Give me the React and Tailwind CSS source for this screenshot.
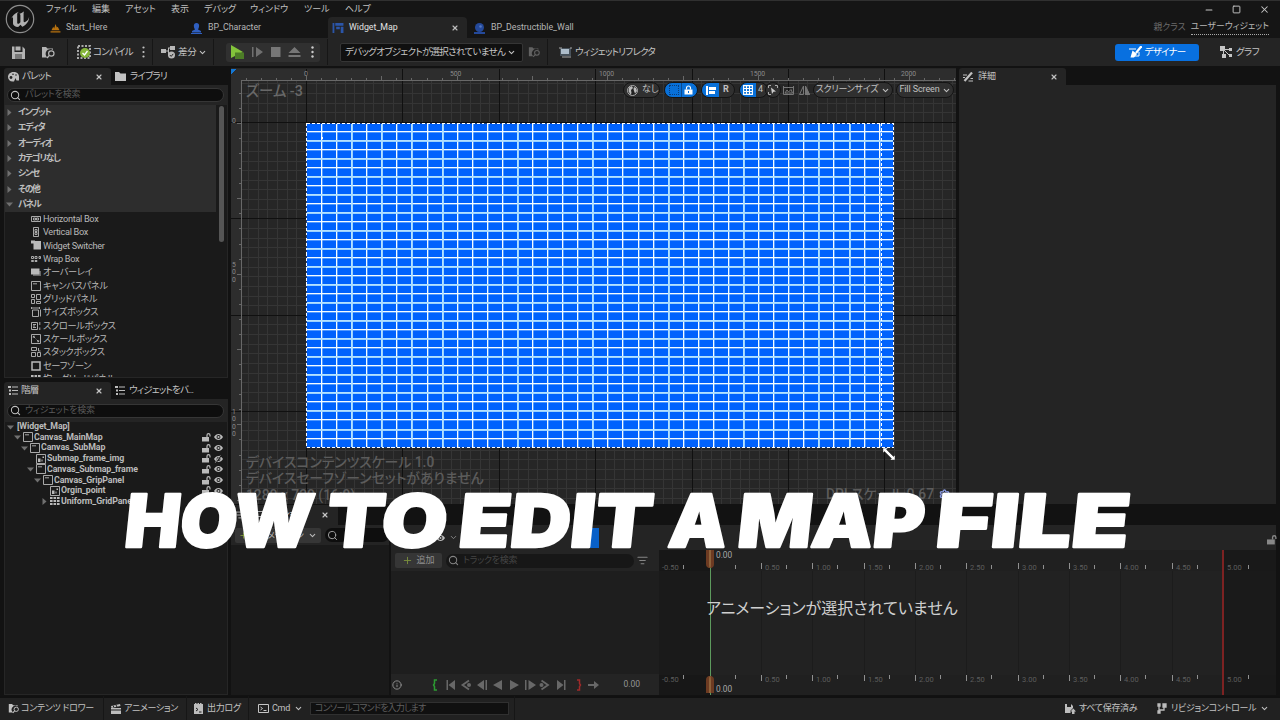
import {
  ChevronDown,
  Search,
  X,
  Info,
  Plus,
  Settings,
  Minus,
  Square,
  ListFilter,
} from "lucide-react";
import clsx from "clsx";

const MENU = [
  { label: "ファイル", w: "w-[46px]" },
  { label: "編集", w: "w-[33px]" },
  { label: "アセット", w: "w-[46px]" },
  { label: "表示", w: "w-[33px]" },
  { label: "デバッグ", w: "w-[46px]" },
  { label: "ウィンドウ", w: "w-[54px]" },
  { label: "ツール", w: "w-[41px]" },
  { label: "ヘルプ", w: "w-[40px]" },
];

const CATEGORIES = ["インプット", "エディタ", "オーディオ", "カテゴリなし", "シンセ", "その他", "パネル"];

const WIDGETS = [
  { label: "Horizontal Box", icon: "hbox" },
  { label: "Vertical Box", icon: "vbox" },
  { label: "Widget Switcher", icon: "switcher" },
  { label: "Wrap Box", icon: "wrap" },
  { label: "オーバーレイ", icon: "overlay" },
  { label: "キャンバスパネル", icon: "canvas" },
  { label: "グリッドパネル", icon: "grid" },
  { label: "サイズボックス", icon: "size" },
  { label: "スクロールボックス", icon: "scroll" },
  { label: "スケールボックス", icon: "scale" },
  { label: "スタックボックス", icon: "stack" },
  { label: "セーフゾーン", icon: "safe" },
  { label: "均一グリッドパネル", icon: "uniform" },
];

const TREE = [
  { label: "Canvas_MainMap", pad: "pl-[9px]", icon: "canvas", arrow: "down" },
  { label: "Canvas_SubMap", pad: "pl-[16px]", icon: "canvas", arrow: "down" },
  { label: "Submap_frame_img", pad: "pl-[22px]", icon: "img", hidden: true },
  { label: "Canvas_Submap_frame", pad: "pl-[22px]", icon: "canvas", arrow: "down" },
  { label: "Canvas_GripPanel", pad: "pl-[29px]", icon: "canvas", arrow: "down" },
  { label: "Orgin_point", pad: "pl-[36px]", icon: "img" },
  { label: "Uniform_GridPanel", pad: "pl-[36px]", icon: "uniform", arrow: "right" },
];

const GLYPHS = {
  hbox: <path d="M.5 2.500h9v5h-9zM2.500 4h2v2h-2zM5.500 4h2v2h-2z" />,
  vbox: <path d="M2.500.5h5v9h-5zM4 2.500h2v2H4zM4 5.500h2v2H4z" />,
  switcher: (
    <g fill="currentColor" stroke="none">
      <path d="M2.500 1H10v8.500H2.500zM0 .5h4v3H0z" />
    </g>
  ),
  wrap: <path d="M.5 2.500h2v2h-2zM4 2.500h2v2H4zM8 2.500h1.500v2H8zM.5 6.500h2v1h-2zM4 6.500h2v1H4z" />,
  overlay: (
    <g stroke="none">
      <path d="M2 4h8v5H2z" fill="#666" />
      <path d="M0 1.500h8.500V7.500H0z" fill="currentColor" />
    </g>
  ),
  canvas: <path d="M.5.5h9v9h-9zM2 2.800h4" />,
  grid: <path d="M.5.5h3v3h-3zM5.500.5h4v5h-4zM.5 5.500h3v4h-3zM5.500 7.500h4v2h-4z" />,
  size: <path d="M1.500 3h6v6.500h-6zM.5 1h8M9.500 2.500v7M.5 0v2M8.500 0v2" />,
  scroll: <path d="M.5 1.500h6v7h-6zM2 3.500h3M2 5h2M2 6.500h3M8.800 1v3M8.800 6.500v2.500" />,
  scale: <path d="M.5.5h9v9h-9zM2.300 2.300l2 2M2.300 2.300h1.500M2.300 2.300v1.500M7.700 7.700l-2-2M7.700 7.700H6.200M7.700 7.700V6.200" />,
  stack: <path d="M.5.5h5v3h-5zM.5 5.500h4v4h-4zM6.500 5.500h3v4h-3zM7.500 1v3h2" />,
  safe: <path d="M1 1h8v8H1z" strokeWidth="1.500" />,
  uniform: (
    <path
      d="M0 1h2.600v2H0zM3.500 1h2.600v2H3.500zM7 1h2.600v2H7zM0 4h2.600v2H0zM3.500 4h2.600v2H3.500zM7 4h2.600v2H7zM0 7h2.600v2H0zM3.500 7h2.600v2H3.500zM7 7h2.600v2H7z"
      fill="currentColor"
      stroke="none"
    />
  ),
  img: (
    <g>
      <path d="M.5.5h9v9h-9z" />
      <path d="M2 8V4.500h2.500V8zM5.500 7.500V5.500h1v2zM6.500 2.500h1.500V4H6.500z" fill="currentColor" stroke="none" />
    </g>
  ),
};

function Glyph({ name }) {
  return (
    <svg viewBox="0 0 10 10" className="size-[10px] shrink-0 text-[#b9b9b9]" fill="none" stroke="currentColor" strokeWidth="0.9">
      {GLYPHS[name]}
    </svg>
  );
}

function Arrow({ dir }) {
  return (
    <svg viewBox="0 0 7 7" className="size-[7px] shrink-0 fill-[#707070]">
      {dir === "down" && <path d="M0 1.500h7L3.500 5.500z" />}
      {dir === "right" && <path d="M1.500 0v7L5.500 3.500z" />}
    </svg>
  );
}

/* Solid padlock with the shackle swung to the right */
function Unlock({ className }) {
  return (
    <svg viewBox="0 0 9 9" className={clsx("shrink-0", className)} fill="currentColor">
      <path d="M0 4h7v4.500H0z" />
      <path d="M5 4V2.200a1.500 1.500 0 0 1 3 0V3.500" fill="none" stroke="currentColor" strokeWidth="1.200" />
    </svg>
  );
}

function EyeIcon({ off }) {
  return (
    <svg viewBox="0 0 10 8" className="h-[8px] w-[9px] shrink-0">
      <path d="M0 4c2.500-4.500 7.500-4.500 10 0-2.500 4.500-7.500 4.500-10 0z" fill="#bdbdbd" />
      <circle cx="5" cy="4" r="2.200" fill="#1a1a1a" />
      <circle cx="5" cy="4" r="1.200" fill="#bdbdbd" />
      {off && <path d="M8 0L2 8" stroke="#1a1a1a" strokeWidth="1.500" />}
      {off && <path d="M7 0L1.500 8" stroke="#bdbdbd" strokeWidth="0.900" />}
    </svg>
  );
}

function Dots() {
  return (
    <svg viewBox="0 0 3 12" className="h-3 w-[3px] shrink-0 fill-[#c4c4c4]">
      <circle cx="1.500" cy="1.500" r="1.100" />
      <circle cx="1.500" cy="6" r="1.100" />
      <circle cx="1.500" cy="10.500" r="1.100" />
    </svg>
  );
}

function FolderSearch({ className }) {
  return (
    <svg viewBox="0 0 15 13" className={clsx("shrink-0", className)} fill="currentColor">
      <path d="M1 1h4l1.500 1.500H12V4a4 4 0 0 0-5.500 7.500H1z" />
      <circle cx="10.300" cy="7.500" r="2.700" fill="none" stroke="currentColor" strokeWidth="1.200" />
      <path d="M8.300 9.500L6 12" stroke="currentColor" strokeWidth="1.300" />
    </svg>
  );
}

function GraphIcon({ className }) {
  return (
    <svg viewBox="0 0 14 12" className={clsx("shrink-0", className)} fill="currentColor">
      <path d="M1 0h5v5H1zM10 2h3v3h-3zM10 8h3v3h-3zM3 8h4v4H3z" />
      <path d="M6 3.500h4M4.500 5v3M6 5l4 4" stroke="currentColor" />
    </svg>
  );
}

function UnrealLogo() {
  return (
    <svg viewBox="0 0 30 30" className="size-[30px] shrink-0">
      <circle cx="15" cy="15" r="13.700" fill="#151515" stroke="#8d8d8d" strokeWidth="1.200" />
      <path
        d="M6 15.500c1-3.500 4-6.300 7.800-7.700-1.200 1-1.600 1.700-1.600 2.800v8.300c0 .8 1.300 1.300 2.200.3l1-.9v-7.200c0-.8-.5-1.100-1.200-1.200 1.500-.3 3.300-1.200 4.500-2.300.2 0 .3.200.2.500-.4.600-.3 1.200-.3 2.200v7c0 .9.800 1.100 1.500.8 2.300-1 3.600-3 4-5.300.2 4-2.400 8.300-6.800 9.900l-1.800-1.900-2.300 2.200c-3.300-.1-5.200-2-5.200-3.600v-6.100c-.9.100-1.600 1-2 2.200z"
        fill="#b0b0b0"
      />
    </svg>
  );
}

function TitleBar() {
  return (
    <header className="flex h-[38px] border-t border-[#303030] bg-[#151515]">
      <div className="w-[46px] shrink-0 pl-[5px] pt-[3px]">
        <UnrealLogo />
      </div>
      <div className="flex min-w-0 flex-1 flex-col">
        <div className="flex h-[16px] items-center pt-px text-[9px] text-[#c0c0c0]">
          {MENU.map((m) => (
            <span key={m.label} className={m.w}>
              {m.label}
            </span>
          ))}
          <div className="ml-auto flex items-center gap-[18px] pr-[10px] text-[#c8c8c8]">
            <Minus size={10} strokeWidth={2.500} />
            <Square size={9} strokeWidth={2.500} />
            <X size={11} strokeWidth={2.200} />
          </div>
        </div>
        <div className="flex h-[21px] items-center text-[8.800px] text-[#b5b5b5]">
          <div className="flex w-[138px] items-center gap-[5px] pl-[4px] pt-px">
            <svg viewBox="0 0 11 10" className="h-[9px] w-[11px]" fill="#b8720f">
              <path d="M0 8h11v1.500H0zM1 7l2-4 1 2 1.500-5L7 4l1-1 2 4z" />
            </svg>
            Start_Here
          </div>
          <div className="flex w-[144px] items-center gap-[6px] pl-[7px] pt-px">
            <svg viewBox="0 0 11 11" className="size-[11px]" fill="#2f5fc0">
              <path d="M5.500 0C9 0 8.500 4 7 6.500L10 8v1.500H1V8l3-1.500C2.500 4 2 0 5.500 0zM0 10h11v1H0z" />
            </svg>
            BP_Character
          </div>
          <div className="flex h-full w-[139px] items-center rounded-t bg-[#242424] pl-[4px] pr-[8px] pt-px text-[#e2e2e2]">
            <svg viewBox="0 0 12 11" className="mr-[5px] h-[10px] w-3" fill="#2b55a8">
              <path d="M0 0h2v11H0zM3 0h9v3H3zM4 4h4v3H4zM9 4h3v7H9z" />
            </svg>
            Widget_Map
            <X size={8} strokeWidth={3.500} className="ml-auto text-[#bbb]" />
          </div>
          <div className="flex items-center gap-[6px] pl-[7px] pt-px">
            <svg viewBox="0 0 11 11" className="size-[11px]" fill="#24499a">
              <circle cx="5.500" cy="4.500" r="4.500" />
              <path d="M0 9h11v2H0z" />
              <circle cx="6.500" cy="3.500" r="1.300" fill="#5577c0" />
            </svg>
            BP_Destructible_Wall
          </div>
          <div className="ml-auto flex gap-[5px] pr-[11px] pt-px">
            <span className="text-[#6c6c6c]">親クラス</span>
            <span className="border-b border-dotted border-[#aaa] leading-[10px]">ユーザーウィジェット</span>
          </div>
        </div>
      </div>
    </header>
  );
}

function Sep({ className }) {
  return <div className={clsx("h-[26px] w-px shrink-0 bg-[#161616]", className)} />;
}

function Toolbar() {
  return (
    <div className="flex h-[28px] items-center bg-[#242424] text-[9.500px] tracking-[-0.75px] text-[#c4c4c4]">
      <div className="flex w-[67px] items-center gap-[16px] pl-[12px] text-[#b4b4b4]">
        <svg viewBox="0 0 13 13" className="size-[13px]" fill="currentColor">
          <path d="M0 .5h2.500v5.500h8V.5L13 3v10H0zM3.500.5h5v4h-5z" />
          <path d="M3 8h7v5H3z" fill="#777" />
        </svg>
        <FolderSearch className="h-[13px] w-[15px]" />
      </div>
      <Sep />
      <div className="flex w-[84px] items-center gap-[2px] pl-[9px]">
        <svg viewBox="0 0 14 14" className="size-[14px] shrink-0">
          <path d="M1 1h12v12H1z" fill="none" stroke="#aaa" strokeWidth="2" strokeDasharray="2 1.500" />
          <circle cx="8" cy="8" r="5" fill="#86b63a" />
          <path d="M5.500 8l2 2 3-4" fill="none" stroke="#fff" strokeWidth="1.300" />
        </svg>
        コンパイル
        <span className="ml-auto mr-[7px]">
          <Dots />
        </span>
      </div>
      <Sep />
      <div className="flex w-[60px] items-center gap-[2px] pl-[8px]">
        <svg viewBox="0 0 15 13" className="h-[13px] w-[15px] shrink-0" fill="#b8b8b8">
          <path d="M0 3h5v4H0zM9 0h5v4H9zM5 4.500h2V1.500h2v1H8V9h1v1H7V5.500H5z" />
          <circle cx="10.500" cy="9" r="3.500" />
          <path d="M8.800 9l1.400 1.400 2-2.500" fill="none" stroke="#242424" />
        </svg>
        <span className="tracking-[-0.3px]">差分</span>
        <ChevronDown size={9} strokeWidth={2.800} />
      </div>
      <Sep />
      <div className="ml-[12px] flex h-[19px] w-[94px] items-center rounded-[3px] bg-[#303030] pl-[4px]">
        <svg viewBox="0 0 88 14" className="h-[14px] w-[88px]">
          <path d="M1 0v13l12-6z" fill="#83c43b" />
          <path d="M5 7.500h9V14H5z" fill="#4d7d27" />
          <path d="M22 2h1.500v10H22zM26 2l7 5-7 5z" fill="#707070" />
          <path d="M41 2h9.500v10H41z" fill="#777" />
          <path d="M58.500 8l6-6 6 6zM58.500 10h12v2h-12z" fill="#777" />
          <circle cx="82.500" cy="2.500" r="1.200" fill="#ccc" />
          <circle cx="82.500" cy="7" r="1.200" fill="#ccc" />
          <circle cx="82.500" cy="11.500" r="1.200" fill="#ccc" />
        </svg>
      </div>
      <Sep className="ml-[7px]" />
      <div className="ml-[12px] flex h-[19px] w-[183px] items-center justify-between rounded-[2px] border border-[#353535] bg-[#101010] pl-[4px] pr-[6px] tracking-[-0.7px]">
        デバッグオブジェクトが選択されていません
        <ChevronDown size={9} strokeWidth={2.800} />
      </div>
      <FolderSearch className="ml-[5px] h-[12px] w-[13px] text-[#626262]" />
      <Sep className="ml-[6px]" />
      <div className="ml-[11px] flex items-center gap-[3px]">
        <svg viewBox="0 0 13 11" className="h-[11px] w-[13px]">
          <path d="M1 1h11v8H1z" fill="#47515a" />
          <path d="M2 2h8v5H2z" fill="#aebdca" />
          <path d="M0 1h3M11 1h2M3 10h9" stroke="#aaa" />
        </svg>
        ウィジェットリフレクタ
      </div>
      <div className="ml-auto flex h-[17px] w-[84px] items-center justify-center gap-[3px] rounded-[3px] bg-[#0870e0] text-white">
        <svg viewBox="0 0 13 12" className="h-3 w-[13px]" fill="none" stroke="currentColor">
          <path d="M0 3h7M10 6v4H4" strokeWidth="1" />
          <path d="M12.500 0L7 7" strokeWidth="2.200" />
          <path d="M3.500 4.500L8 8l-3 3.500H1.500z" fill="currentColor" stroke="none" />
        </svg>
        デザイナー
      </div>
      <div className="flex w-[81px] items-center gap-[3px] pl-[20px] tracking-[-0.6px]">
        <GraphIcon className="h-[12px] w-[14px]" />
        グラフ
      </div>
    </div>
  );
}

function SearchBox({ placeholder }) {
  return (
    <div className="ml-[3px] mr-[4px] flex h-[14px] items-center gap-[4px] rounded-full border border-[#363636] bg-[#0e0e0e] pl-[2px] text-[9px] tracking-[-0.2px] text-[#5a5a5a]">
      <Search size={11} strokeWidth={2.200} className="text-[#c0c0c0]" />
      {placeholder}
    </div>
  );
}

function Tabs({ first, second, icons }) {
  return (
    <div className="flex h-[17px] shrink-0 items-center text-[9.500px] tracking-[-0.8px] text-[#c4c4c4]">
      <div className="flex h-full w-[107px] items-center gap-[3px] rounded-t-[3px] bg-[#242424] pl-[4px] pr-[8px]">
        {icons[0]}
        {first}
        <X size={8} strokeWidth={3.500} className="ml-auto" />
      </div>
      <div className="flex items-center gap-[4px] pl-[4px]">
        {icons[1]}
        {second}
      </div>
    </div>
  );
}

const paletteIcon = (
  <svg viewBox="0 0 11 10" className="h-[10px] w-[11px]" fill="#bdbdbd">
    <path d="M5.500 0C9 0 11 2 11 4.500v4H8.500L7.500 6 6 9.500H4.500C2 9.500 0 7.500 0 5s2-5 5.500-5z" />
    <circle cx="3" cy="5.500" r="1.400" fill="#242424" />
    <circle cx="5" cy="2.300" r=".8" fill="#242424" />
    <circle cx="8" cy="3" r=".8" fill="#242424" />
  </svg>
);
const folderIcon = (
  <svg viewBox="0 0 11 9" className="h-[9px] w-[11px]" fill="#c2c2c2">
    <path d="M0 0h4l1.500 1.500H11V9H0z" />
  </svg>
);
const listIcon = (
  <svg viewBox="0 0 10 9" className="h-[9px] w-[10px]" fill="#bdbdbd">
    <path d="M0 0h3v2H0zM4 .5h6v1H4zM1 3.500h2v2H1zM4 4h6v1H4zM1 7h2v2H1zM4 7.500h6v1H4z" />
  </svg>
);

function Palette() {
  return (
    <section className="flex h-[310px] flex-col">
      <Tabs first="パレット" second="ライブラリ" icons={[paletteIcon, folderIcon]} />
      <div className="flex h-[20px] shrink-0 flex-col justify-center bg-[#242424]">
        <SearchBox placeholder="パレットを検索" />
      </div>
      <div className="flex min-h-0 flex-1 justify-between overflow-hidden border border-t-0 border-[#262626] bg-[#1a1a1a]">
        <div className="w-[211px]">
          {CATEGORIES.map((c, i) => (
            <div
              key={c}
              className="flex h-[15.300px] items-center gap-[5px] bg-[#2d2d2d] pl-[1px] text-[8.800px] font-bold tracking-[-1.200px] text-[#bdbdbd]"
            >
              <Arrow dir={i === 6 ? "down" : "right"} />
              {c}
            </div>
          ))}
          {WIDGETS.map((w) => (
            <div
              key={w.label}
              className="flex h-[13.370px] items-center gap-[2px] pl-[26px] text-[9.200px] tracking-[-0.320px] text-[#b8b8b8]"
            >
              <Glyph name={w.icon} />
              <span>{w.label}</span>
            </div>
          ))}
        </div>
        <div className="mr-[3px] mt-[1px] h-[136px] w-[5px] rounded-full bg-[#555]" />
      </div>
    </section>
  );
}

function Hierarchy() {
  return (
    <section className="mt-[4px] flex min-h-0 flex-1 flex-col">
      <Tabs first="階層" second="ウィジェットをバ..." icons={[listIcon, listIcon]} />
      <div className="flex h-[23px] shrink-0 flex-col justify-center bg-[#242424]">
        <SearchBox placeholder="ウィジェットを検索" />
      </div>
      <div className="flex-1 border border-t-0 border-[#262626] bg-[#1a1a1a] text-[8.800px] font-bold tracking-[-0.1px] text-[#bababa]">
        <div className="flex h-[10px] items-center gap-[3px] pl-[2px]">
          <Arrow dir="down" />
          [Widget_Map]
        </div>
        {TREE.map((t) => (
          <div key={t.label} className={clsx("flex h-[10.700px] items-center pr-[4px]", t.pad)}>
            <Arrow dir={t.arrow} />
            <span className="ml-[2px] mr-[1px] flex">
              <Glyph name={t.icon} />
            </span>
            <span className="flex-1">{t.label}</span>
            <Unlock className="mr-[3px] size-[9px]" />
            <EyeIcon off={t.hidden} />
          </div>
        ))}
      </div>
    </section>
  );
}

/* Canvas coordinates below are local to the viewport, whose corner is the
 * ruler corner. One slate unit is 0.3014px at this zoom level. */
const ORIGIN_X = 75;
const ORIGIN_Y = 54;
const TICK = 15.07;
const MINOR = 9.64;

const range = (from, to) => Array.from({ length: to - from + 1 }, (_, i) => from + i);

function CanvasGrid() {
  return (
    <svg viewBox="0 0 725 435" className="block h-[435px] w-[725px]" shapeRendering="crispEdges">
      <rect width="725" height="435" fill="#262626" />
      <g stroke="#353535">
        {range(-6, 67).map((i) => (
          <path key={i} d={`M${Math.round(ORIGIN_X + i * MINOR) + 0.5} 12V435`} />
        ))}
        {range(-4, 39).map((i) => (
          <path key={i} d={`M11 ${Math.round(ORIGIN_Y + i * MINOR) - 0.5}H725`} />
        ))}
      </g>
      <rect width="725" height="11" fill="#2d2d2d" />
      <rect width="10" height="435" fill="#2d2d2d" />
      <g stroke="#101010">
        {range(0, 6).map((i) => (
          <path key={i} d={`M${Math.round(ORIGIN_X + i * 96.4) + 0.5} 0V435`} />
        ))}
        {range(0, 3).map((i) => (
          <path key={i} d={`M0 ${Math.round(ORIGIN_Y + i * 96.4) - 0.5}H725`} />
        ))}
      </g>
      <g stroke="#686868">
        <path d="M10.500 435V11.500H725" fill="none" />
        {range(-4, 43).map((i) => (
          <path key={i} d={`M${Math.round(ORIGIN_X + i * TICK) + 0.5} 11v-${i % 5 === 0 ? 4 : 2}`} />
        ))}
        {range(-2, 25).map((i) => (
          <path key={i} d={`M10 ${Math.round(ORIGIN_Y + i * TICK) + 0.5}h-${i % 5 === 0 ? 4 : 2}`} />
        ))}
      </g>
      <path d="M0 0h5L0 5z" fill="#1477d4" />
      {/* uniform grid widget */}
      <rect x="75" y="54" width="588" height="325" fill="#0062fd" />
      <g fill="#c8ecff" fillOpacity="0.4">
        {range(1, 38).map((i) => (
          <rect key={i} x={Math.round(ORIGIN_X + i * TICK)} y="54" width="2" height="325" />
        ))}
        {range(1, 35).map((i) => (
          <rect key={i} x="75" y={Math.round(ORIGIN_Y - 1.5 + i * 9.03)} width="588" height="2" />
        ))}
      </g>
      <g fill="#f6fcff">
        {range(1, 38).map((i) => (
          <rect key={i} x={Math.round(ORIGIN_X + i * TICK)} y="54" width="1" height="325" />
        ))}
        {range(1, 35).map((i) => (
          <rect key={i} x="75" y={Math.round(ORIGIN_Y - 1.5 + i * 9.03)} width="588" height="1" />
        ))}
      </g>
      <g fill="#a8dcff" fillOpacity="0.85">
        {range(1, 17).map((i) => (
          <rect key={i} x="75" y={Math.round(ORIGIN_Y - 1.5 + i * 18.06)} width="588" height="2" />
        ))}
        {[3, 5, 7, 9, 14, 19, 24, 29, 34, 36].map((i) => (
          <rect key={i} x={Math.round(ORIGIN_X + i * TICK)} y="54" width="2" height="325" />
        ))}
      </g>
      <path d="M75.500 54.500H662.500V378.500H75.500z" fill="none" stroke="#1b3f80" />
      <path d="M75.500 54.500H662.500V378.500H75.500zM650.500 54V378" fill="none" stroke="#fff" strokeDasharray="3 2" />
      <rect x="90" y="68" width="2" height="2" fill="#fff" />
    </svg>
  );
}

const RULER_X = [
  { v: "0", x: "left-[73px]" },
  { v: "500", x: "left-[219px]" },
  { v: "1000", x: "left-[368px]" },
  { v: "1500", x: "left-[519px]" },
  { v: "2000", x: "left-[670px]" },
];

const RULER_Y = [
  { v: "0", y: "top-[50px]" },
  { v: "500", y: "top-[194px]" },
  { v: "1000", y: "top-[341px]" },
];

function Pill({ className, children }) {
  return (
    <div className={clsx("flex h-[16px] items-center overflow-hidden rounded-full border border-[#141414]", className)}>
      {children}
    </div>
  );
}

function ViewportTools() {
  return (
    <div className="absolute left-[392px] top-[14px] flex items-center text-[9px] text-[#c0c0c0]">
      <Pill className="w-[37px] gap-[4px] bg-[#303030] pl-[3px]">
        <svg viewBox="0 0 11 11" className="size-[11px] shrink-0">
          <circle cx="5.500" cy="5.500" r="5" fill="#222" stroke="#bbb" strokeWidth=".9" />
          <path d="M2 2.500L5 1l1 2-2 2 .5 3-1 2L1.500 6zM7 2l2 1 1 3-2 2.500L7 6 6.500 4z" fill="#bbb" />
        </svg>
        なし
      </Pill>
      <Pill className="ml-[4px] w-[34px] bg-[#0870d8]">
        <div className="flex h-full w-[17px] shrink-0 items-center justify-center border-r border-[#0a4a90]">
          <div className="ml-[2px] size-[10px] border border-dotted border-[#0b3d78]" />
        </div>
        <svg viewBox="0 0 9 10" className="ml-[2px] h-[10px] w-[9px]" fill="#fff">
          <path d="M.5 4.500h8v5h-8z" />
          <path d="M2.500 4.500V3a2 2 0 0 1 4 0v1.500" fill="none" stroke="#fff" strokeWidth="1.200" />
          <path d="M4 6h1v2H4z" fill="#0870d8" />
        </svg>
      </Pill>
      <Pill className="ml-[3px] w-[34px] bg-[#303030]">
        <div className="flex h-full w-[17px] items-center justify-center bg-[#0870d8]">
          <svg viewBox="0 0 10 9" className="h-[9px] w-[10px]" fill="#fff">
            <path d="M0 0h2v9H0zM3 1h7v3H3zM3 5h6v3H3z" />
          </svg>
        </div>
        <span className="pl-[4px] font-bold">R</span>
      </Pill>
      <Pill className="ml-[4px] w-[29px] bg-[#303030]">
        <div className="flex h-full w-[16px] shrink-0 items-center justify-center bg-[#0870d8]">
          <svg viewBox="0 0 10 10" className="size-[10px]" fill="none" stroke="#fff" strokeWidth="1.100">
            <path d="M.6.6h8.800v8.800H.6zM3.500.6v8.800M6.500.6v8.800M.6 3.500h8.800M.6 6.500h8.800" />
          </svg>
        </div>
        <span className="pl-[2px]">4</span>
      </Pill>
      <Pill className="-ml-[3px] w-[16px] justify-center bg-[#303030]">
        <svg viewBox="0 0 10 10" className="size-[10px] shrink-0" fill="none" stroke="#aaa">
          <path d="M.5 3V.5H3M7 .5h2.500V3M.5 7v2.500H3" />
          <path d="M3 2.500l5 4-2.500.3L4 9z" fill="#ccc" stroke="none" />
        </svg>
      </Pill>
      <div className="flex w-[32px] items-center gap-[5px] pl-[2px] text-[#777]">
        <svg viewBox="0 0 11 9" className="h-[9px] w-[11px]" fill="none" stroke="currentColor">
          <path d="M.5 0v8.500h10V0M.5 1.500h10M2 7l2-3 1.500 2L8 3.500 9.500 7z" />
        </svg>
        <svg viewBox="0 0 11 9" className="h-[9px] w-[11px]" fill="none" stroke="currentColor">
          <path d="M4.500 0v8.500H.5zM6.500 0v8.500h4z" />
          <path d="M6.500 1l4 7.500h-4z" fill="currentColor" />
        </svg>
      </div>
      <Pill className="w-[80px] justify-center gap-[3px] bg-[#303030]">
        <span className="tracking-[-0.200px]">スクリーンサイズ</span>
        <ChevronDown size={9} strokeWidth={2.800} />
      </Pill>
      <Pill className="ml-[3px] w-[58px] justify-center gap-[2px] bg-[#303030] tracking-[-0.1px]">
        Fill Screen
        <ChevronDown size={9} strokeWidth={2.800} />
      </Pill>
    </div>
  );
}

function Viewport() {
  return (
    <section className="relative h-[436px] w-[725px] shrink-0 overflow-hidden bg-[#262626] pt-px">
      <CanvasGrid />
      {RULER_X.map((r) => (
        <span key={r.v} className={clsx("absolute top-[2px] text-[6.800px] leading-[9px] tracking-[-0.1px] text-[#8a8a8a]", r.x)}>
          {r.v}
        </span>
      ))}
      {RULER_Y.map((r) => (
        <span
          key={r.v}
          className={clsx("absolute left-[1px] w-[4px] break-all whitespace-normal text-[6.800px] leading-[7.300px] text-[#8a8a8a]", r.y)}
        >
          {r.v}
        </span>
      ))}
      <span className="absolute left-[15px] top-[14px] text-[14.300px] font-medium leading-[18px] text-[#686868]">ズーム -3</span>
      <ViewportTools />
      <div className="absolute left-[15px] top-[386px] text-[13.850px] font-medium leading-[16.300px] text-[#5c5c5c]">
        <div>デバイスコンテンツスケール 1.0</div>
        <div>デバイスセーフゾーンセットがありません</div>
        <div>1280 x 720 (16:9)</div>
      </div>
      <div className="absolute right-[6px] top-[417px] flex items-center gap-[5px] text-[13.850px] font-medium leading-[18px] text-[#5c5c5c]">
        DPI スケール 0.67
        <Settings size={11} strokeWidth={3} className="text-[#8a9ae0]" />
      </div>
      {/* resize cursor at the corner of the selection */}
      <svg viewBox="0 0 12 12" className="absolute left-[652px] top-[380px] size-[12px]">
        <path d="M0 0h5L3.500 1.500l7 7L12 7v5H7l1.500-1.500-7-7L0 5z" fill="#fff" stroke="#111" strokeWidth="0.400" />
      </svg>
    </section>
  );
}

function Details() {
  return (
    <section className="ml-[3px] mr-[4px] flex flex-1 flex-col">
      <div className="flex h-[17px] w-[107px] items-center gap-[5px] rounded-t-[3px] bg-[#242424] pl-[4px] pr-[8px] text-[9px] text-[#c0c0c0]">
        <svg viewBox="0 0 10 10" className="size-[10px]" fill="none" stroke="#c0c0c0">
          <path d="M9 .5L1.500 9" strokeWidth="2.200" />
          <path d="M0 3h4M0 5.500h2M5.500 9h4.500M7.500 6.500H10" />
        </svg>
        詳細
        <X size={8} strokeWidth={3.500} className="ml-auto" />
      </div>
      <div className="flex-1 bg-[#242424]" />
    </section>
  );
}

/* Timeline ruler: 51.35px per half second, zero at 51px */
const HALF = 51.35;

function RulerStrip({ flip }) {
  return (
    <div className={clsx("relative overflow-hidden bg-[#202020]", flip ? "h-[20px]" : "h-[21px]")}>
      <div className="absolute inset-y-0 left-0 w-[51px] bg-[#171717]" />
      <div className="absolute inset-y-0 left-[564px] right-0 bg-[#191919]" />
      {range(-1, 10).map((k) => (
        <div
          key={k}
          className={clsx("absolute flex w-[52px] text-[7.500px] leading-[9px] text-[#5d5d5d]", flip ? "top-0" : "top-[13px]")}
          style={{ left: Math.round(50.5 + k * HALF) }}
        >
          <i className="h-[6px] w-px bg-[#909090]" />
          <span className="w-[24px] pl-[3px]">{k === 0 ? "" : (k / 2).toFixed(2)}</span>
          <i className={clsx("h-[4px] w-px bg-[#909090]", !flip && "mt-[2px]")} />
        </div>
      ))}
    </div>
  );
}

function Timeline() {
  return (
    <div className="relative flex w-[617px] shrink-0 flex-col bg-[#222]">
      <RulerStrip />
      <div className="relative flex-1">
        <div className="absolute inset-y-0 left-0 w-[51px] bg-[#1a1a1a]" />
        <div className="absolute inset-y-0 left-[564px] right-0 bg-[#1a1a1a]" />
        {range(1, 9).map((k) => (
          <div key={k} className="absolute inset-y-0 w-px bg-[#1c1c1c]" style={{ left: Math.round(50.5 + k * HALF) }} />
        ))}
      </div>
      <RulerStrip flip />
      <div className="absolute left-[51px] top-0 h-full w-px bg-[#5d9a5d]" />
      <div className="absolute left-[563px] top-0 h-full w-[1.500px] bg-[#7d2222]" />
      <div className="absolute left-[47px] top-0 h-[18px] w-[8px] rounded-b-[4px] border-x-[3px] border-[#6d3b22] bg-[#8d623b]" />
      <div className="absolute bottom-[2px] left-[47px] h-[17px] w-[8px] rounded-t-[4px] border-x-[3px] border-[#6d3b22] bg-[#8d623b]" />
      <span className="absolute left-[57px] top-0 text-[8.300px] leading-[10px] text-[#a8a8a8]">0.00</span>
      <span className="absolute bottom-px left-[57px] text-[8.300px] leading-[10px] text-[#a8a8a8]">0.00</span>
      <span className="absolute left-[47px] top-[47px] text-[16px] leading-[24px] text-[#cfcfcf]">
        アニメーションが選択されていません
      </span>
    </div>
  );
}

function Transport() {
  return (
    <div className="flex h-[21px] items-center bg-[#242424] pl-[1px] pr-[19px] text-[8.500px] text-[#949494]">
      <Info size={10} strokeWidth={2.200} />
      <svg viewBox="0 0 180 14" className="ml-[25px] h-[14px] w-[180px]" fill="#686868">
        <path d="M10 2H7.500v3.500L6.500 7l1 1.500V12H10" fill="none" stroke="#2c9b32" strokeWidth="1.500" />
        <path d="M19.500 2h1.500v10h-1.500zM28 2v10l-6.500-5z" />
        <path d="M42 2.500L35.500 7l6.500 4.500" fill="none" stroke="#686868" strokeWidth="1.800" />
        <circle cx="42" cy="7" r="2" />
        <path d="M57 2v10l-7-5zM58.500 2H60v10h-1.500z" />
        <path d="M75 2v10l-9-5zM83 2v10l9-5z" />
        <path d="M98 2h1.500v10H98zM101.500 2v10l7.500-5z" />
        <path d="M114.500 2.500L121 7l-6.500 4.500" fill="none" stroke="#686868" strokeWidth="1.800" />
        <circle cx="114.500" cy="7" r="2" />
        <path d="M130 2v10l6.500-5zM137 2h1.500v10H137z" />
        <path d="M150 2h2.500v3.500l1 1.500-1 1.500V12H150" fill="none" stroke="#a02a2a" strokeWidth="1.500" />
        <path d="M161 6h6V3l5 4-5 4V8h-6z" />
      </svg>
      <span className="ml-auto">0.00</span>
    </div>
  );
}

function Animations() {
  return (
    <section className="mr-[4px] flex min-h-0 flex-1 flex-col">
      <div className="flex h-[21px] items-center">
        <div className="flex h-[20px] w-[107px] items-center gap-[3px] rounded-t-[3px] bg-[#242424] pl-[4px] pr-[9px] text-[9.500px] tracking-[-0.500px] text-[#c4c4c4]">
          <ListFilter size={10} />
          アニメーション
          <X size={8} strokeWidth={3.500} className="ml-auto" />
        </div>
      </div>
      <div className="flex min-h-0 flex-1">
        <div className="flex w-[158px] shrink-0 flex-col bg-[#1a1a1a]">
          <div className="flex h-[20px] items-center gap-[4px] bg-[#242424] pl-[4px]">
            <div className="flex h-[15px] w-[86px] items-center justify-between rounded-[2px] bg-[#363636] px-[4px] text-[8.500px] tracking-[-0.3px] text-[#bbb]">
              <Plus size={9} className="text-[#89a83e]" />
              アニメーション
              <ChevronDown size={9} strokeWidth={2.800} />
            </div>
            <div className="flex h-[14px] flex-1 items-center rounded-full bg-[#0e0e0e] pl-[2px]">
              <Search size={11} className="text-[#aaa]" />
            </div>
          </div>
        </div>
        <div className="ml-[2px] flex min-w-0 flex-1 flex-col">
          <div className="flex h-[25px] items-center bg-[#242424] pl-[45px] text-[#888]">
            <EyeIcon />
            <ChevronDown size={9} strokeWidth={2.500} className="ml-[4px]" />
            <div className="ml-[121px] mt-auto mb-[2px] h-[20px] w-[20px] bg-[#0860c8]" />
            <Unlock className="-mr-px ml-auto mt-1 size-[10px]" />
          </div>
          <div className="flex min-h-0 flex-1">
            <div className="flex flex-1 flex-col bg-[#1e1e1e]">
              <div className="flex h-[21px] items-center bg-[#242424] pl-[4px] pr-[11px] text-[9px]">
                <div className="flex h-[15px] w-[47px] items-center justify-center gap-[3px] rounded-[2px] bg-[#363636] text-[#909090]">
                  <Plus size={11} className="text-[#7a8e3c]" />
                  追加
                </div>
                <div className="ml-[4px] flex h-[14px] flex-1 items-center gap-[4px] rounded-full bg-[#171717] pl-[2px] tracking-[-0.300px] text-[#454545]">
                  <Search size={11} strokeWidth={2.200} className="text-[#858585]" />
                  トラックを検索
                </div>
                <ListFilter size={11} strokeWidth={2.500} className="ml-[3px] text-[#858585]" />
              </div>
              <div className="flex-1" />
              <Transport />
            </div>
            <Timeline />
          </div>
        </div>
      </div>
    </section>
  );
}

function StatusBar() {
  return (
    <footer className="flex h-[24px] items-center border-t-2 border-[#111] bg-[#212121] pb-px text-[9px] tracking-[-0.3px] text-[#c2c2c2]">
      <div className="flex w-[103px] items-center gap-px pl-[8px]">
        <FolderSearch className="h-[11px] w-[12px]" />
        コンテンツ ドロワー
      </div>
      <Sep />
      <div className="flex w-[82px] items-center gap-[3px] pl-[7px]">
        <svg viewBox="0 0 10 10" className="size-[10px]" fill="#bdbdbd">
          <path d="M0 4h10v6H0zM0 2L9 0l.5 2L.5 4z" />
          <path d="M2 1.500l1 2M5 1l1 2M0 6h10" stroke="#212121" />
        </svg>
        アニメーション
      </div>
      <Sep />
      <div className="flex w-[61px] items-center gap-[4px] pl-[7px]">
        <svg viewBox="0 0 9 11" className="h-[11px] w-[9px]" fill="#bdbdbd">
          <path d="M0 1h1V0h1.500v1h1V0H5v1h1V0h1.500v1H9v10H0z" />
          <path d="M2 5l2 1.500L2 8M5 9h2.500" fill="none" stroke="#222" />
        </svg>
        出力ログ
      </div>
      <Sep />
      <div className="flex w-[61px] items-center gap-[3px] pl-[9px]">
        <svg viewBox="0 0 11 9" className="h-[9px] w-[11px]" fill="none" stroke="#c4c4c4">
          <path d="M.5.5h10v8H.5zM2.500 3l2 1.500-2 1.500M5.500 6.500h3" />
        </svg>
        Cmd
        <ChevronDown size={9} strokeWidth={2.800} className="ml-px" />
      </div>
      <div className="flex h-[13px] w-[199px] items-center border border-[#303030] bg-[#101010] pl-[4px] text-[8.800px] tracking-[-0.650px] text-[#606060]">
        コンソールコマンドを入力します
      </div>
      <Sep className="ml-[5px]" />
      <div className="ml-auto flex w-[92px] items-center gap-[3px]">
        <svg viewBox="0 0 11 10" className="h-[10px] w-[11px]" fill="#bdbdbd">
          <path d="M0 0h2v3h4V0l2 2v2L5.500 6.500V9H0z" />
          <path d="M7 10V7.500H5.500L8.300 4.500l2.700 3H9.500V10z" />
        </svg>
        すべて保存済み
      </div>
      <div className="flex w-[123px] items-center gap-[4px]">
        <svg viewBox="0 0 10 11" className="h-[11px] w-[10px]" fill="none" stroke="#bdbdbd" strokeWidth="1.300">
          <path d="M2 3v6M2 7h5V4" />
          <path d="M1 1h2v2H1zM6 1h3v3H6zM1 8h2v2H1z" fill="#bdbdbd" />
        </svg>
        リビジョンコントロール
        <ChevronDown size={9} strokeWidth={2.800} />
      </div>
    </footer>
  );
}

const TITLE = [
  { word: "HOW", x: 123, w: 188 },
  { word: "TO", x: 324, w: 121 },
  { word: "EDIT", x: 457, w: 193 },
  { word: "A", x: 667, w: 58 },
  { word: "MAP", x: 736, w: 186 },
  { word: "FILE", x: 934, w: 193 },
];

function TitleOverlay() {
  return (
    <svg viewBox="0 0 1280 80" className="pointer-events-none absolute left-0 top-[480px] h-[80px] w-[1280px]">
      {TITLE.map((t) => (
        <text
          key={t.word}
          transform={`translate(${t.x} 67) skewX(-6)`}
          textLength={t.w}
          lengthAdjust="spacingAndGlyphs"
          strokeLinejoin="round"
          className="fill-white stroke-white stroke-[2.5px] font-['Inter',sans-serif] text-[73px] font-black"
        >
          {t.word}
        </text>
      ))}
    </svg>
  );
}

export default function App() {
  return (
    <div className="relative flex h-[720px] w-[1280px] flex-col overflow-hidden whitespace-nowrap bg-[#121212] font-['Roboto','Noto_Sans_CJK_JP',sans-serif] [font-feature-settings:'palt']">
      <TitleBar />
      <Toolbar />
      <main className="flex h-[630px] pb-px pt-[2px]">
        <aside className="ml-[4px] mr-[3px] flex w-[224px] shrink-0 flex-col">
          <Palette />
          <Hierarchy />
        </aside>
        <div className="flex min-w-0 flex-1 flex-col">
          <div className="flex h-[436px] shrink-0">
            <Viewport />
            <Details />
          </div>
          <Animations />
        </div>
      </main>
      <StatusBar />
      <TitleOverlay />
    </div>
  );
}
